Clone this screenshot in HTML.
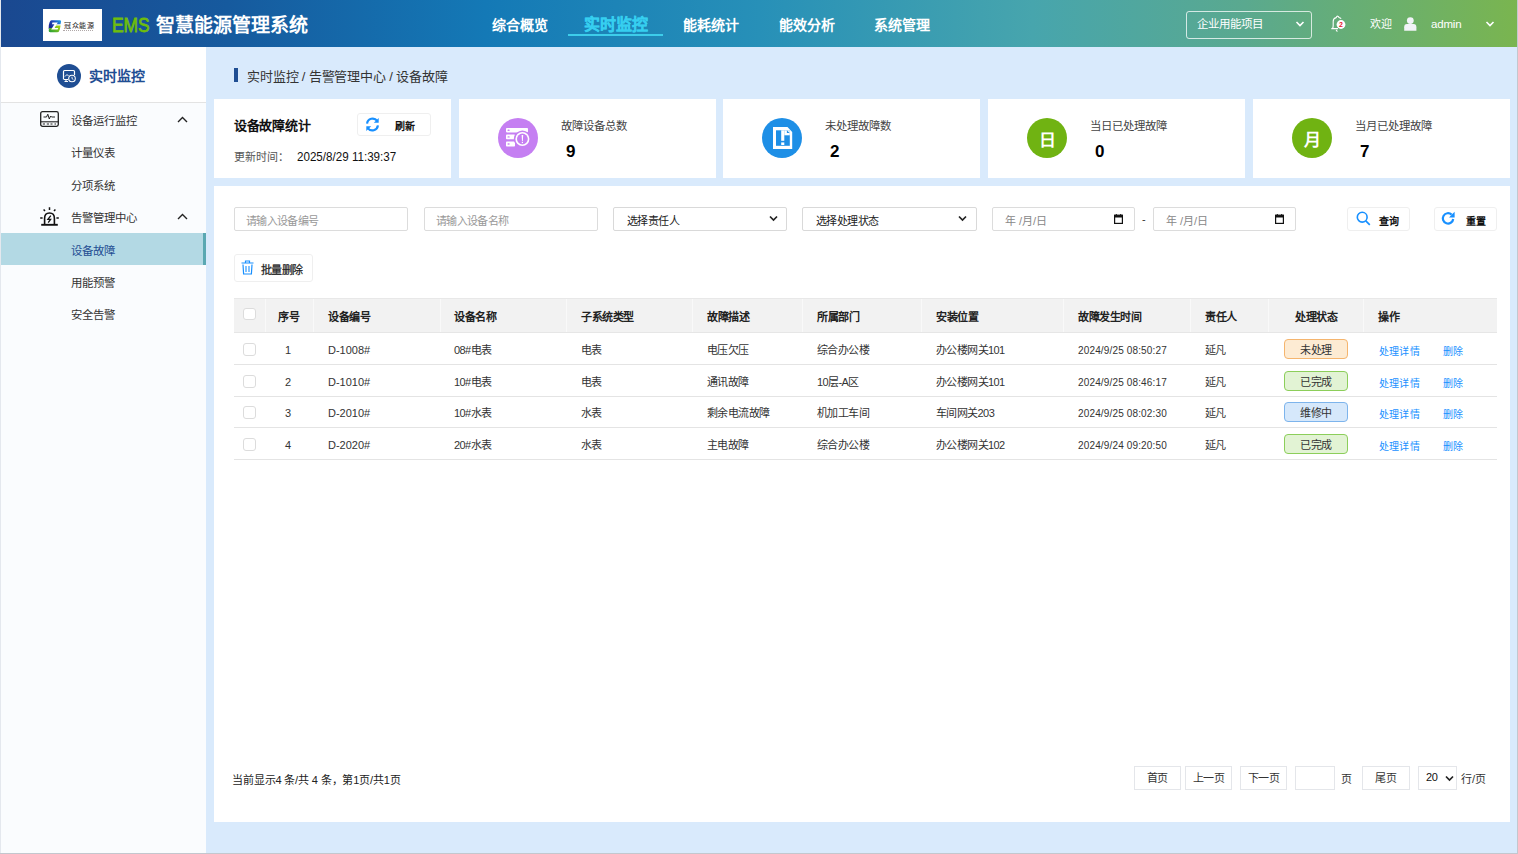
<!DOCTYPE html>
<html lang="zh-CN"><head><meta charset="utf-8">
<style>
*{box-sizing:border-box;margin:0;padding:0}
html,body{width:1518px;height:854px;overflow:hidden}
body{position:relative;background:#d9eafc;font-family:"Liberation Sans",sans-serif;color:#333}
.a{position:absolute;white-space:nowrap}
#hdr{left:0;top:0;width:1518px;height:47px;background:linear-gradient(90deg,#1a4890 0%,#165a9e 15%,#1479b6 32%,#2790b8 50%,#47a5ad 68%,#5aa98f 82%,#7ab54f 100%)}
.nav{top:14px;height:22px;line-height:22px;font-size:14px;font-weight:bold;color:#fff;text-align:center}
#side{left:0;top:47px;width:206px;height:807px;background:#fafcfe;border-left:1px solid #e8ebef}
.mi{left:1px;width:205px;height:32px;line-height:33px;font-size:11.4px;color:#333}
.card{top:99px;height:79px;background:#fff}
.circ{position:absolute;left:39px;top:19px;width:40px;height:40px;border-radius:50%}
.ctit{position:absolute;left:102px;top:19px;font-size:11.4px;color:#444;line-height:16px}
.cnum{position:absolute;left:107px;top:43px;font-size:17px;font-weight:bold;color:#000;line-height:20px}
.inp{top:207px;height:24px;border:1px solid #dcdcdc;border-radius:2px;background:#fff;font-size:11px;letter-spacing:-0.7px;color:#999;line-height:27px;padding-left:11px}
.sel{top:207px;height:24px;border:1px solid #d9d9d9;border-radius:2px;background:#fff;font-size:11px;letter-spacing:-0.6px;color:#222;line-height:26px;padding-left:13px}
.btn{border:1px solid #efefef;border-radius:3px;background:#fff}
.th{font-size:11px;font-weight:bold;letter-spacing:-0.4px;color:#222;top:299px;line-height:37px}
.td{font-size:11px;color:#333;line-height:35px}
.rl{left:234px;width:1263px;height:1px;background:#e4e4e4}
.badge{left:1284px;width:64px;height:20px;border-radius:4px;font-size:11px;letter-spacing:-0.4px;line-height:21px;text-align:center;color:#333}
.op{font-size:10px;letter-spacing:0.2px;color:#1890ff;line-height:37px}
.pb{top:766px;height:24px;border:1px solid #e4e6ea;background:#fff;font-size:11px;letter-spacing:-0.4px;line-height:22px;text-align:center;color:#333}
</style></head><body>

<!-- header -->
<div id="hdr" class="a"></div>
<div class="a" style="left:43px;top:9px;width:59px;height:32px;background:#fff">
  <svg class="a" style="left:5px;top:11px" width="14" height="13" viewBox="0 0 14 13">
    <defs>
      <linearGradient id="lgt" x1="0" y1="0.6" x2="1" y2="0"><stop offset="0" stop-color="#1a2490"/><stop offset="0.5" stop-color="#1f4fc0"/><stop offset="1" stop-color="#1aa6ec"/></linearGradient>
      <linearGradient id="lgb" x1="0" y1="1" x2="1" y2="0.2"><stop offset="0" stop-color="#1d9a3a"/><stop offset="1" stop-color="#a6d414"/></linearGradient>
    </defs>
    <path d="M3.5 0.2 H12 Q13.4 0.2 13 1.8 L12.5 4.2 H8.6 L6 8 H1.2 L0.6 9.5 Q0.3 5 1.6 2.2 Q2.3 0.3 3.5 0.2Z" fill="url(#lgt)"/>
    <path d="M7.2 5.6 H12.6 L11.8 9.6 Q11.2 12.3 9 12.3 H2.4 Q0.4 12.3 0.7 10.5 L1.2 8 H5.4Z" fill="url(#lgb)"/>
    <path d="M4.4 2.6 H9.8 L6.6 7.9 H10.2 L9.6 9.6 H3.2 L6.4 4.3 H4Z" fill="#fff"/>
  </svg>
  <div class="a" style="left:21px;top:12px;font-size:7px;line-height:9px;color:#231815;letter-spacing:0.6px">冠众能源</div>
  <div class="a" style="left:20px;top:21px;width:30px;height:0;border-top:1px dotted #b0a8a8"></div>
</div>
<div class="a" style="left:112px;top:10px;font-size:20px;line-height:30px;color:#6fbd0c;-webkit-text-stroke:0.8px #6fbd0c;transform:scaleX(0.87);transform-origin:0 0">EMS</div>
<div class="a" style="left:156px;top:11px;font-size:19px;line-height:30px;color:#fff;font-weight:bold">智慧能源管理系统</div>

<div class="a nav" style="left:471px;width:97px">综合概览</div>
<div class="a nav" style="left:568px;width:95px;color:#36cff0;font-size:16px;-webkit-text-stroke:0.3px #36cff0">实时监控</div>
<div class="a" style="left:568px;top:34px;width:95px;height:2px;background:#3dcdea"></div>
<div class="a nav" style="left:663px;width:96px">能耗统计</div>
<div class="a nav" style="left:759px;width:96px">能效分析</div>
<div class="a nav" style="left:854px;width:96px">系统管理</div>

<div class="a" style="left:1186px;top:11px;width:126px;height:28px;border:1px solid rgba(255,255,255,0.75);border-radius:3px"></div>
<div class="a" style="left:1197px;top:14px;font-size:11.5px;line-height:20px;color:#fff">企业用能项目</div>
<svg class="a" style="left:1295px;top:20px" width="10" height="8" viewBox="0 0 10 8"><path d="M1.5 2 L5 5.5 L8.5 2" stroke="#fff" stroke-width="1.6" fill="none"/></svg>

<svg class="a" style="left:1330px;top:15px" width="18" height="18" viewBox="0 0 18 18">
  <path d="M2.5 13.5 Q3.2 12.5 3.2 10.5 V6.5 Q3.2 3.2 6.2 2.6 Q6.8 1 7.8 1.2 Q8.6 1.4 9 2.5 Q10.3 2.8 11.2 3.6" stroke="#fff" stroke-width="1.1" fill="none"/>
  <path d="M1.3 13.6 H8 M6.2 14.8 Q6.6 16.3 7.6 16.3" stroke="#fff" stroke-width="1.1" fill="none"/>
  <circle cx="11" cy="9.5" r="4.4" fill="#fff"/>
  <text x="11" y="12" font-size="7" font-weight="bold" fill="#e8102a" text-anchor="middle" font-family="Liberation Sans">2</text>
</svg>
<div class="a" style="left:1370px;top:14px;font-size:11px;line-height:21px;color:#fff">欢迎</div>
<svg class="a" style="left:1404px;top:17px" width="13" height="14" viewBox="0 0 13 14">
  <circle cx="6.3" cy="3.6" r="3.4" fill="#f2f3f8"/>
  <path d="M0.2 13.8 V10.2 Q0.2 7 3 7 H9.6 Q12.4 7 12.4 10.2 V13.8Z" fill="#f2f3f8"/>
</svg>
<div class="a" style="left:1431px;top:14px;font-size:11.5px;line-height:20px;color:#fff;letter-spacing:-0.2px">admin</div>
<svg class="a" style="left:1485px;top:20px" width="10" height="8" viewBox="0 0 10 8"><path d="M1.5 2 L5 5.5 L8.5 2" stroke="#fff" stroke-width="1.6" fill="none"/></svg>


<!-- sidebar -->
<div id="side" class="a"></div>
<div class="a" style="left:1px;top:47px;width:205px;height:56px;background:#fff;border-bottom:1px solid #e3e3e3"></div>
<svg class="a" style="left:57px;top:64px" width="24" height="24" viewBox="0 0 24 24">
  <circle cx="12" cy="12" r="12" fill="#1f4e93"/>
  <path d="M6.5 15.5 V7.5 Q6.5 6.5 7.5 6.5 H16.5 Q17.5 6.5 17.5 7.5 V11" stroke="#fff" stroke-width="1.2" fill="none"/>
  <path d="M7 15.5 H11 M9 15.5 V17.5 M7.5 17.5 H11" stroke="#fff" stroke-width="1.1" fill="none"/>
  <path d="M8 12.5 L10 10.5 L11.5 12" stroke="#fff" stroke-width="1" fill="none"/>
  <circle cx="15" cy="14.5" r="3.3" stroke="#fff" stroke-width="1.1" fill="#1f4e93"/>
  <path d="M15 12.8 V14.6 L16.3 15.4" stroke="#fff" stroke-width="0.9" fill="none"/>
</svg>
<div class="a" style="left:89px;top:65px;font-size:14px;line-height:22px;font-weight:bold;color:#1f4e93">实时监控</div>

<svg class="a" style="left:40px;top:111px" width="19" height="16" viewBox="0 0 19 16">
  <rect x="0.7" y="0.7" width="17.6" height="14.6" rx="1.8" stroke="#222" stroke-width="1.3" fill="none"/>
  <path d="M0.7 10.8 H18.3" stroke="#222" stroke-width="1.1"/>
  <path d="M3.5 6 H6.5 L7.8 3.2 L9.3 8 L10.6 5 L11.6 6 H15" stroke="#222" stroke-width="1" fill="none"/>
  <path d="M2.8 13 H5 M6.8 13 H9 M10.5 13 H12.5 M14.5 13 H16" stroke="#222" stroke-width="1.2"/>
</svg>
<div class="a mi" style="top:105px;padding-left:70px">设备运行监控</div>
<svg class="a" style="left:177px;top:116px" width="11" height="7" viewBox="0 0 11 7"><path d="M1 6 L5.5 1.5 L10 6" stroke="#222" stroke-width="1.4" fill="none"/></svg>
<div class="a mi" style="top:137px;padding-left:70px">计量仪表</div>
<div class="a mi" style="top:169px;padding-left:70px;line-height:35px">分项系统</div>
<svg class="a" style="left:40px;top:207px" width="19" height="19" viewBox="0 0 19 19">
  <path d="M4.6 17 V11.2 Q4.6 6 9.5 6 Q14.4 6 14.4 11.2 V17" stroke="#111" stroke-width="1.6" fill="none"/>
  <path d="M1.2 17.8 H17.8" stroke="#111" stroke-width="1.9"/>
  <path d="M10.8 8.6 L7.9 12.3 H10.6 L8.2 15.6" stroke="#111" stroke-width="1.3" fill="none"/>
  <path d="M9.5 0.3 V3 M3.6 2.4 L5 3.9 M15.4 2.4 L14 3.9 M0.2 11 H2.6 M16.4 11 H18.8" stroke="#111" stroke-width="1.5"/>
</svg>
<div class="a mi" style="top:201px;padding-left:70px;line-height:34px">告警管理中心</div>
<svg class="a" style="left:177px;top:213px" width="11" height="7" viewBox="0 0 11 7"><path d="M1 6 L5.5 1.5 L10 6" stroke="#222" stroke-width="1.4" fill="none"/></svg>
<div class="a mi" style="top:233px;padding-left:70px;line-height:36px;background:#b3d9e4;color:#1f4e93;border-right:3px solid #5aa8b2">设备故障</div>
<div class="a mi" style="top:265px;padding-left:70px;line-height:36px">用能预警</div>
<div class="a mi" style="top:297px;padding-left:70px;line-height:36px">安全告警</div>

<!-- breadcrumb -->
<div class="a" style="left:234px;top:68px;width:4px;height:14px;background:#1f4e93"></div>
<div class="a" style="left:247px;top:66px;font-size:13px;line-height:21px;letter-spacing:-0.15px;color:#333">实时监控 / 告警管理中心 / 设备故障</div>

<!-- cards -->
<div class="a card" style="left:214px;width:237px">
  <div class="a" style="left:20px;top:17px;font-size:13px;font-weight:bold;color:#111;line-height:20px;letter-spacing:-0.3px">设备故障统计</div>
  <div class="a btn" style="left:143px;top:14px;width:74px;height:23px"></div>
  <svg class="a" style="left:151px;top:18px" width="15" height="15" viewBox="0 0 16 16">
    <path d="M2.2 7 A6 6 0 0 1 13 4.2" stroke="#1890ff" stroke-width="2.3" fill="none"/>
    <path d="M14.6 1 V6.2 H9.4Z" fill="#1890ff"/>
    <path d="M13.8 9 A6 6 0 0 1 3 11.8" stroke="#1890ff" stroke-width="2.3" fill="none"/>
    <path d="M1.4 15 V9.8 H6.6Z" fill="#1890ff"/>
  </svg>
  <div class="a" style="left:181px;top:18px;font-size:10px;font-weight:bold;color:#111;line-height:20px">刷新</div>
  <div class="a" style="left:20px;top:50px;font-size:11px;color:#555;line-height:17px">更新时间：</div>
  <div class="a" style="left:83px;top:49px;font-size:13.5px;color:#111;line-height:18px;transform:scaleX(0.86);transform-origin:0 0">2025/8/29 11:39:37</div>
</div>
<div class="a card" style="left:459px;width:257px">
  <div class="circ" style="background:#c57ff2"></div>
  <svg class="a" style="left:45px;top:27px" width="28" height="24" viewBox="0 0 28 24">
    <rect x="2" y="2" width="22" height="4.4" rx="0.8" fill="#fff"/>
    <rect x="2" y="8.5" width="9" height="4.8" rx="0.8" fill="#fff"/>
    <rect x="2" y="15.5" width="9" height="5" rx="0.8" fill="#fff"/>
    <ellipse cx="4.6" cy="4.2" rx="1.2" ry="0.7" fill="#c57ff2"/>
    <ellipse cx="4.6" cy="10.9" rx="1.2" ry="0.7" fill="#c57ff2"/>
    <ellipse cx="4.6" cy="18" rx="1.2" ry="0.7" fill="#c57ff2"/>
    <circle cx="18.4" cy="13" r="8.6" fill="#c57ff2"/>
    <circle cx="18.4" cy="13" r="7" fill="#fff"/>
    <circle cx="18.4" cy="13" r="5.4" fill="#c57ff2"/>
    <path d="M17.6 9 H19.2 L18.8 15 H18Z" fill="#fff"/>
    <rect x="17.8" y="15.8" width="1.2" height="1.3" fill="#fff"/>
  </svg>
  <div class="ctit">故障设备总数</div>
  <div class="cnum">9</div>
</div>
<div class="a card" style="left:723px;width:257px">
  <div class="circ" style="background:#1e8fe6"></div>
  <svg class="a" style="left:50px;top:28px" width="20" height="22" viewBox="0 0 20 22">
    <path d="M0 0 H14.5 L19.2 5 V22 H0Z" fill="#fff"/>
    <rect x="3" y="3.3" width="13.8" height="15.5" fill="#1e8fe6"/>
    <rect x="11.3" y="3.3" width="5.5" height="5" fill="#fff"/>
    <path d="M13.9 3.3 V5.9 H16.6Z" fill="#1e8fe6"/>
    <rect x="8.2" y="3.3" width="3.1" height="10.5" fill="#fff"/>
    <rect x="8.2" y="15.4" width="3.1" height="2.6" fill="#fff"/>
  </svg>
  <div class="ctit">未处理故障数</div>
  <div class="cnum">2</div>
</div>
<div class="a card" style="left:988px;width:257px">
  <div class="circ" style="background:#70b312"></div>
  <div class="a" style="left:39px;top:19px;width:40px;height:40px;line-height:46px;text-align:center;font-size:17px;font-weight:bold;color:#fff">日</div>
  <div class="ctit">当日已处理故障</div>
  <div class="cnum">0</div>
</div>
<div class="a card" style="left:1253px;width:257px">
  <div class="circ" style="background:#70b312"></div>
  <div class="a" style="left:39px;top:19px;width:40px;height:40px;line-height:46px;text-align:center;font-size:17px;font-weight:bold;color:#fff">月</div>
  <div class="ctit">当月已处理故障</div>
  <div class="cnum">7</div>
</div>

<!-- main panel -->
<div class="a" style="left:214px;top:186px;width:1296px;height:636px;background:#fff"></div>

<!-- filters -->
<div class="a inp" style="left:234px;width:174px">请输入设备编号</div>
<div class="a inp" style="left:424px;width:174px">请输入设备名称</div>
<div class="a sel" style="left:613px;width:174px">选择责任人</div>
<svg class="a" style="left:769px;top:215px" width="9" height="7" viewBox="0 0 9 7"><path d="M1 1.5 L4.5 5 L8 1.5" stroke="#222" stroke-width="1.7" fill="none"/></svg>
<div class="a sel" style="left:802px;width:175px">选择处理状态</div>
<svg class="a" style="left:958px;top:215px" width="9" height="7" viewBox="0 0 9 7"><path d="M1 1.5 L4.5 5 L8 1.5" stroke="#222" stroke-width="1.7" fill="none"/></svg>
<div class="a inp" style="left:992px;width:143px;padding-left:12px;color:#888;letter-spacing:0">年 /月/日</div>
<svg class="a" style="left:1114px;top:214px" width="9" height="10" viewBox="0 0 9 10"><rect x="0.6" y="1.2" width="7.8" height="8.2" stroke="#111" stroke-width="1.2" fill="none"/><rect x="0.6" y="1.2" width="7.8" height="2.3" fill="#111"/><path d="M2.3 0 V1.5 M6.7 0 V1.5" stroke="#111" stroke-width="1"/></svg>
<div class="a" style="left:1142px;top:211px;font-size:11px;line-height:16px;color:#333">-</div>
<div class="a inp" style="left:1153px;width:143px;padding-left:12px;color:#888;letter-spacing:0">年 /月/日</div>
<svg class="a" style="left:1275px;top:214px" width="9" height="10" viewBox="0 0 9 10"><rect x="0.6" y="1.2" width="7.8" height="8.2" stroke="#111" stroke-width="1.2" fill="none"/><rect x="0.6" y="1.2" width="7.8" height="2.3" fill="#111"/><path d="M2.3 0 V1.5 M6.7 0 V1.5" stroke="#111" stroke-width="1"/></svg>
<div class="a btn" style="left:1347px;top:207px;width:63px;height:24px"></div>
<svg class="a" style="left:1356px;top:211px" width="15" height="15" viewBox="0 0 15 15"><circle cx="6.2" cy="6.2" r="4.9" stroke="#1890ff" stroke-width="1.6" fill="none"/><path d="M9.8 9.8 L13.8 13.8" stroke="#1890ff" stroke-width="1.7"/></svg>
<div class="a" style="left:1379px;top:214px;font-size:10px;font-weight:bold;line-height:16px;color:#111">查询</div>
<div class="a btn" style="left:1434px;top:207px;width:63px;height:24px"></div>
<svg class="a" style="left:1441px;top:211px" width="15" height="15" viewBox="0 0 15 15"><path d="M12.2 8 A5.2 5.2 0 1 1 10.6 3.6" stroke="#1890ff" stroke-width="2.2" fill="none"/><path d="M13.6 0.8 V6.4 H8Z" fill="#1890ff"/></svg>
<div class="a" style="left:1466px;top:214px;font-size:10px;font-weight:bold;line-height:16px;color:#111">重置</div>

<div class="a btn" style="left:234px;top:254px;width:79px;height:28px"></div>
<svg class="a" style="left:241px;top:260px" width="13" height="15" viewBox="0 0 13 15"><path d="M0.5 3 H12.5 M4.5 3 V1 H8.5 V3" stroke="#1890ff" stroke-width="1.2" fill="none"/><path d="M2 4.5 L2.6 14 H10.4 L11 4.5" stroke="#1890ff" stroke-width="1.2" fill="none"/><path d="M5 6 V12 M8 6 V12" stroke="#1890ff" stroke-width="1.1"/></svg>
<div class="a" style="left:261px;top:262px;font-size:11px;letter-spacing:-0.6px;line-height:16px;color:#222;-webkit-text-stroke:0.25px #222">批量删除</div>

<!-- table -->
<div class="a" style="left:234px;top:298px;width:1263px;height:35px;background:#f2f2f2;border-top:1px solid #e8e8e8;border-bottom:1px solid #e6e6e6"></div>
<div class="a" style="left:265px;top:299px;width:1px;height:33px;background:#f9f9f9"></div>
<div class="a" style="left:313px;top:299px;width:1px;height:33px;background:#f9f9f9"></div>
<div class="a" style="left:440px;top:299px;width:1px;height:33px;background:#f9f9f9"></div>
<div class="a" style="left:566px;top:299px;width:1px;height:33px;background:#f9f9f9"></div>
<div class="a" style="left:692px;top:299px;width:1px;height:33px;background:#f9f9f9"></div>
<div class="a" style="left:802px;top:299px;width:1px;height:33px;background:#f9f9f9"></div>
<div class="a" style="left:921px;top:299px;width:1px;height:33px;background:#f9f9f9"></div>
<div class="a" style="left:1063px;top:299px;width:1px;height:33px;background:#f9f9f9"></div>
<div class="a" style="left:1190px;top:299px;width:1px;height:33px;background:#f9f9f9"></div>
<div class="a" style="left:1268px;top:299px;width:1px;height:33px;background:#f9f9f9"></div>
<div class="a" style="left:1363px;top:299px;width:1px;height:33px;background:#f9f9f9"></div>
<div class="a" style="left:243px;top:308px;width:13px;height:12px;border:1px solid #dcdcdc;border-radius:3px;background:#fff"></div>
<div class="a th" style="left:278px">序号</div>
<div class="a th" style="left:328px">设备编号</div>
<div class="a th" style="left:454px">设备名称</div>
<div class="a th" style="left:581px">子系统类型</div>
<div class="a th" style="left:707px">故障描述</div>
<div class="a th" style="left:817px">所属部门</div>
<div class="a th" style="left:936px">安装位置</div>
<div class="a th" style="left:1078px">故障发生时间</div>
<div class="a th" style="left:1205px">责任人</div>
<div class="a th" style="left:1295px">处理状态</div>
<div class="a th" style="left:1378px">操作</div>
<div class="a" style="left:243px;top:343px;width:13px;height:13px;border:1px solid #dcdcdc;border-radius:3px;background:#fff"></div>
<div class="a td" style="left:278px;top:333px;width:20px;text-align:center">1</div>
<div class="a td" style="left:328px;top:333px">D-1008#</div>
<div class="a td" style="letter-spacing:-0.6px;left:454px;top:333px">08#电表</div>
<div class="a td" style="letter-spacing:-0.6px;left:581px;top:333px">电表</div>
<div class="a td" style="letter-spacing:-0.6px;left:707px;top:333px">电压欠压</div>
<div class="a td" style="letter-spacing:-0.6px;left:817px;top:333px">综合办公楼</div>
<div class="a td" style="letter-spacing:-0.6px;left:936px;top:333px">办公楼网关101</div>
<div class="a td" style="letter-spacing:0.15px;left:1078px;top:333px;font-size:10px">2024/9/25 08:50:27</div>
<div class="a td" style="letter-spacing:-0.6px;left:1205px;top:333px">延凡</div>
<div class="a badge" style="top:339px;background:#fdebd3;border:1px solid #f5b56e">未处理</div>
<div class="a op" style="left:1379px;top:333px">处理详情</div>
<div class="a op" style="left:1443px;top:333px">删除</div>
<div class="a rl" style="top:364px"></div>
<div class="a" style="left:243px;top:375px;width:13px;height:13px;border:1px solid #dcdcdc;border-radius:3px;background:#fff"></div>
<div class="a td" style="left:278px;top:365px;width:20px;text-align:center">2</div>
<div class="a td" style="left:328px;top:365px">D-1010#</div>
<div class="a td" style="letter-spacing:-0.6px;left:454px;top:365px">10#电表</div>
<div class="a td" style="letter-spacing:-0.6px;left:581px;top:365px">电表</div>
<div class="a td" style="letter-spacing:-0.6px;left:707px;top:365px">通讯故障</div>
<div class="a td" style="letter-spacing:-0.6px;left:817px;top:365px">10层-A区</div>
<div class="a td" style="letter-spacing:-0.6px;left:936px;top:365px">办公楼网关101</div>
<div class="a td" style="letter-spacing:0.15px;left:1078px;top:365px;font-size:10px">2024/9/25 08:46:17</div>
<div class="a td" style="letter-spacing:-0.6px;left:1205px;top:365px">延凡</div>
<div class="a badge" style="top:371px;background:#e2f3d4;border:1px solid #8cce5a">已完成</div>
<div class="a op" style="left:1379px;top:365px">处理详情</div>
<div class="a op" style="left:1443px;top:365px">删除</div>
<div class="a rl" style="top:396px"></div>
<div class="a" style="left:243px;top:406px;width:13px;height:13px;border:1px solid #dcdcdc;border-radius:3px;background:#fff"></div>
<div class="a td" style="left:278px;top:396px;width:20px;text-align:center">3</div>
<div class="a td" style="left:328px;top:396px">D-2010#</div>
<div class="a td" style="letter-spacing:-0.6px;left:454px;top:396px">10#水表</div>
<div class="a td" style="letter-spacing:-0.6px;left:581px;top:396px">水表</div>
<div class="a td" style="letter-spacing:-0.6px;left:707px;top:396px">剩余电流故障</div>
<div class="a td" style="letter-spacing:-0.6px;left:817px;top:396px">机加工车间</div>
<div class="a td" style="letter-spacing:-0.6px;left:936px;top:396px">车间网关203</div>
<div class="a td" style="letter-spacing:0.15px;left:1078px;top:396px;font-size:10px">2024/9/25 08:02:30</div>
<div class="a td" style="letter-spacing:-0.6px;left:1205px;top:396px">延凡</div>
<div class="a badge" style="top:402px;background:#d6e8fb;border:1px solid #7db4ec">维修中</div>
<div class="a op" style="left:1379px;top:396px">处理详情</div>
<div class="a op" style="left:1443px;top:396px">删除</div>
<div class="a rl" style="top:427px"></div>
<div class="a" style="left:243px;top:438px;width:13px;height:13px;border:1px solid #dcdcdc;border-radius:3px;background:#fff"></div>
<div class="a td" style="left:278px;top:428px;width:20px;text-align:center">4</div>
<div class="a td" style="left:328px;top:428px">D-2020#</div>
<div class="a td" style="letter-spacing:-0.6px;left:454px;top:428px">20#水表</div>
<div class="a td" style="letter-spacing:-0.6px;left:581px;top:428px">水表</div>
<div class="a td" style="letter-spacing:-0.6px;left:707px;top:428px">主电故障</div>
<div class="a td" style="letter-spacing:-0.6px;left:817px;top:428px">综合办公楼</div>
<div class="a td" style="letter-spacing:-0.6px;left:936px;top:428px">办公楼网关102</div>
<div class="a td" style="letter-spacing:0.15px;left:1078px;top:428px;font-size:10px">2024/9/24 09:20:50</div>
<div class="a td" style="letter-spacing:-0.6px;left:1205px;top:428px">延凡</div>
<div class="a badge" style="top:434px;background:#e2f3d4;border:1px solid #8cce5a">已完成</div>
<div class="a op" style="left:1379px;top:428px">处理详情</div>
<div class="a op" style="left:1443px;top:428px">删除</div>
<div class="a rl" style="top:459px"></div>

<!-- pagination -->
<div class="a" style="left:232px;top:772px;font-size:11px;letter-spacing:-0.15px;line-height:16px;color:#222">当前显示4 条/共 4 条，第1页/共1页</div>
<div class="a pb" style="left:1134px;width:47px">首页</div>
<div class="a pb" style="left:1185px;width:47px">上一页</div>
<div class="a pb" style="left:1240px;width:47px">下一页</div>
<div class="a pb" style="left:1295px;width:40px"></div>
<div class="a" style="left:1341px;top:771px;font-size:11px;line-height:16px;color:#333">页</div>
<div class="a pb" style="left:1362px;width:48px">尾页</div>
<div class="a pb" style="left:1418px;width:39px;text-align:left;padding-left:7px;color:#111;line-height:20px">20</div>
<svg class="a" style="left:1445px;top:775px" width="9" height="7" viewBox="0 0 9 7"><path d="M1 1.5 L4.5 5 L8 1.5" stroke="#222" stroke-width="1.7" fill="none"/></svg>
<div class="a" style="left:1461px;top:771px;font-size:11px;line-height:16px;color:#333">行/页</div>

<!-- frame borders -->
<div class="a" style="left:0;top:0;width:1px;height:854px;background:#e4e8ee"></div>
<div class="a" style="left:1517px;top:0;width:1px;height:854px;background:#c3c7ce"></div>
<div class="a" style="left:0;top:853px;width:1518px;height:1px;background:#c3c7ce"></div>

</body></html>
